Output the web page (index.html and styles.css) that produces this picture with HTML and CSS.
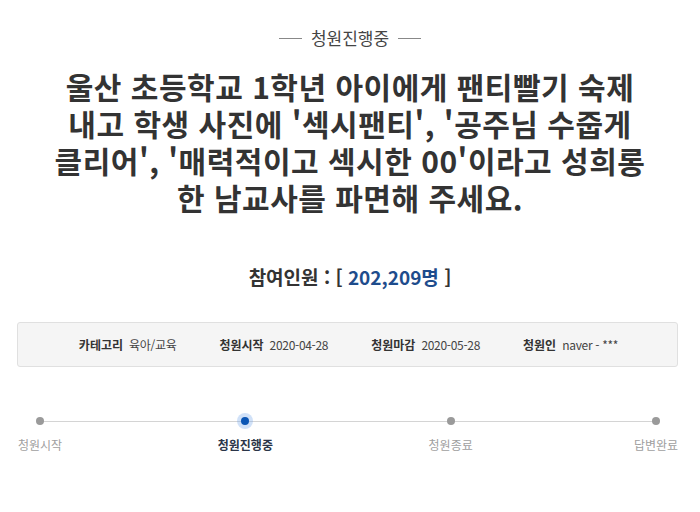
FILE: index.html
```html
<!DOCTYPE html>
<html lang="ko">
<head>
<meta charset="utf-8">
<link rel="stylesheet" href="styles.css">
</head>
<body>
<div class="page">
  <div class="status"><span class="dash"></span><span class="status-text">청원진행중</span><span class="dash"></span></div>
  <h1 class="title">울산 초등학교 1학년 아이에게 팬티빨기 숙제<br>내고 학생 사진에 '섹시팬티', '공주님 수줍게<br>클리어', '매력적이고 섹시한 00'이라고 성희롱<br>한 남교사를 파면해 주세요.</h1>
  <div class="count">참여인원 : [ <span class="num">202,209명</span> ]</div>
  <div class="info">
    <div class="item"><span class="label">카테고리</span><span class="value">육아/교육</span></div>
    <div class="item"><span class="label">청원시작</span><span class="value">2020-04-28</span></div>
    <div class="item"><span class="label">청원마감</span><span class="value">2020-05-28</span></div>
    <div class="item"><span class="label">청원인</span><span class="value">naver - ***</span></div>
  </div>
  <div class="progress">
    <div class="step"><span class="dot"></span><span class="step-label">청원시작</span></div>
    <div class="step active"><span class="dot"></span><span class="step-label">청원진행중</span></div>
    <div class="step"><span class="dot"></span><span class="step-label">청원종료</span></div>
    <div class="step"><span class="dot"></span><span class="step-label">답변완료</span></div>
  </div>
</div>
</body>
</html>
```
FILE: styles.css
```css
* { box-sizing: border-box; }
html, body { margin: 0; padding: 0; background: #fff; }
body {
  font-family: "Noto Sans CJK KR", "Noto Sans", sans-serif;
  color: #333;
  width: 700px;
  height: 512px;
  overflow: hidden;
}
.page { display: flex; flex-direction: column; align-items: center; }
.status {
  display: flex;
  align-items: center;
  gap: 9px;
  margin-top: 27px;
  height: 22px;
}
.dash { width: 23px; height: 1px; background: #888; }
.status-text { font-size: 17px; color: #444; line-height: 22px; }
.title {
  margin: 19px 0 0;
  font-size: 30px;
  line-height: 37px;
  font-weight: 700;
  color: #333;
  text-align: center;
  letter-spacing: 0.5px;
}
.count {
  margin-top: 48px;
  font-size: 19px;
  font-weight: 700;
  color: #333;
  line-height: 26px;
}
.num { color: #1e4c8c; }
.info {
  margin-top: 32px;
  width: 661px;
  height: 45px;
  margin-left: -5px;
  background: #f5f5f5;
  border: 1px solid #e0e0e0;
  border-radius: 3px;
  display: flex;
  align-items: center;
  justify-content: center;
  gap: 43px;
  padding-left: 2px;
}
.item { display: flex; align-items: center; gap: 6px; font-size: 12px; }
.label { font-weight: 700; color: #333; }
.value { color: #444; letter-spacing: -0.3px; }
.progress {
  position: relative;
  margin-top: 46px;
  width: 700px;
  padding-right: 4px;
  display: flex;
  justify-content: space-between;
}
.progress::before {
  content: "";
  position: absolute;
  left: 40px;
  right: 44px;
  top: 8px;
  height: 1px;
  background: #d4d4d4;
}
.step {
  position: relative;
  width: 80px;
  display: flex;
  flex-direction: column;
  align-items: center;
}
.dot {
  width: 8px;
  height: 8px;
  margin-top: 4px;
  border-radius: 50%;
  background: #9a9a9a;
}
.step-label {
  margin-top: 10px;
  font-size: 12px;
  line-height: 20px;
  color: #a0a0a0;
}
.step.active .dot {
  background: #0b56b5;
  box-shadow: 0 0 0 4px rgba(120, 170, 235, 0.35);
}
.step.active .step-label { color: #2b3548; font-weight: 700; }
```
